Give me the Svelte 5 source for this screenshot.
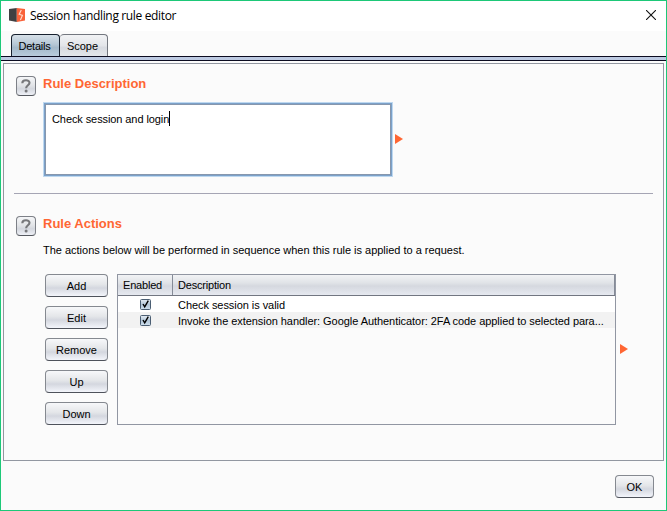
<script>
  const actions = [
    { enabled: true, text: 'Check session is valid' },
    { enabled: true, text: 'Invoke the extension handler: Google Authenticator: 2FA code applied to selected para...' }
  ];
  const buttons = ['Add', 'Edit', 'Remove', 'Up', 'Down'];
</script>

{#snippet help()}
  <span class="help">
    <svg width="10" height="14" viewBox="0 0 10 14">
      <path d="M1.3 4.2C1.3 0.4 8.5 0.2 8.5 3.8C8.5 6.3 5.3 6.2 5.1 9.2" fill="none" stroke="#77787b" stroke-width="2.1" />
      <circle cx="5.1" cy="12.1" r="1.5" fill="#77787b" />
    </svg>
  </span>
{/snippet}

{#snippet arrow()}
  <svg class="arrow" width="8" height="10" viewBox="0 0 8 10"><path d="M0 0L8 5L0 10Z" fill="#ff6633" /></svg>
{/snippet}

<div class="window">
  <header class="titlebar">
    <svg class="logo" width="16" height="14" viewBox="0 0 16 14">
      <path d="M0 1L7.8 0V14L0 12.5Z" fill="#404042" />
      <path d="M7.8 0L16 1V12.5L7.8 14Z" fill="#f9623a" />
      <path d="M12.3 2L10.2 6.2L13.4 7.4L11.4 12" fill="none" stroke="#ffd9ca" stroke-width="1.2" />
    </svg>
    <span class="title">Session handling rule editor</span>
    <svg class="close" width="10" height="10" viewBox="0 0 10 10"><path d="M0 0L10 10M10 0L0 10" stroke="#111" stroke-width="1.1" /></svg>
  </header>

  <nav class="tabs">
    <div class="tab active">Details</div>
    <div class="tab">Scope</div>
  </nav>
  <div class="strip"></div>

  <main class="panel">
    <section class="description">
      {@render help()}
      <div class="body">
        <h2>Rule Description</h2>
        <div class="field-row">
          <div class="field"><span>Check session and login</span><i class="caret"></i></div>
          {@render arrow()}
        </div>
      </div>
    </section>

    <div class="rule"></div>

    <section class="actions">
      {@render help()}
      <div class="body">
        <h2>Rule Actions</h2>
        <p>The actions below will be performed in sequence when this rule is applied to a request.</p>
        <div class="action-row">
          <div class="buttons">
            {#each buttons as label}
              <button>{label}</button>
            {/each}
          </div>
          <div class="table">
            <div class="thead">
              <span class="col-check">Enabled</span>
              <span class="col-text">Description</span>
            </div>
            {#each actions as action}
              <div class="tr">
                <span class="cell-check">
                  {#if action.enabled}
                    <svg width="11" height="11" viewBox="0 0 11 11">
                      <defs><linearGradient id="box" x2="0" y2="1"><stop stop-color="#e6edf4" /><stop offset=".5" stop-color="#b2c5d7" /><stop offset="1" stop-color="#cfe0ee" /></linearGradient></defs>
                      <rect x=".5" y=".5" width="10" height="10" rx="1" fill="url(#box)" stroke="#4b5e73" />
                      <path d="M3 5L4.7 7.9L8.3 1.6" fill="none" stroke="#000" stroke-width="1.4" />
                    </svg>
                  {/if}
                </span>
                <span class="cell-text">{action.text}</span>
              </div>
            {/each}
          </div>
          {@render arrow()}
        </div>
      </div>
    </section>
  </main>

  <footer><button class="ok">OK</button></footer>
</div>

<style>
  :global(body) { margin: 0; }
  .window {
    box-sizing: border-box;
    width: 667px;
    height: 511px;
    border: 1px solid #1dc878;
    background: #fbfbfb;
    color: #000;
    font: 11px/14px "Liberation Sans", Arial, sans-serif;
    display: flex;
    flex-direction: column;
    overflow: hidden;
  }
  .titlebar {
    height: 30px;
    box-sizing: border-box;
    padding: 0 10px 0 8px;
    background: #fff;
    display: flex;
    align-items: center;
    flex: none;
  }
  .logo { margin-right: 5px; margin-top: -2px; }
  .title { font: 12px/16px "Open Sans", "Noto Sans", sans-serif; letter-spacing: -0.35px; flex: 1; white-space: nowrap; }
  .close { margin-top: -2px; }
  .tabs { display: flex; height: 22px; padding: 3px 0 0 10px; flex: none; }
  .tab {
    box-sizing: border-box;
    width: 48px;
    height: 22px;
    padding: 4px 2px 0 0;
    text-align: center;
    border: 1px solid #73777f;
    border-left: 0;
    border-bottom: 0;
    border-radius: 4px 4px 0 0;
    background: linear-gradient(#f2f3f5, #e3e5e9 50%, #d7dae0 60%, #e2e5ea);
  }
  .tab.active {
    width: 49px;
    letter-spacing: -0.25px;
    border: 1px solid #17202e;
    border-bottom: 0;
    background: linear-gradient(#d7e0e8, #b6c7d5 45%, #a4b9ca 60%, #b8cbdc);
  }
  .strip { height: 3px; flex: none; border: solid #0b0b20; border-width: 1px 0; background: #bdcae2; }
  .panel {
    box-sizing: border-box;
    width: 661px;
    height: 398px;
    margin: 2px 0 0 2px;
    border: 1px solid #9297a1;
    flex: none;
  }
  section { display: flex; padding-left: 12px; }
  .description { padding-top: 12px; height: 117px; }
  .help {
    box-sizing: border-box;
    width: 20px;
    height: 20px;
    margin-right: 7px;
    border: 1px solid #7d8087;
    border-bottom-color: #55585f;
    border-radius: 4px;
    background: linear-gradient(#f5f6f8, #e3e5e8 45%, #d4d7de 65%, #eef0f6);
    display: flex;
    align-items: center;
    justify-content: center;
    flex: none;
  }
  h2 { margin: 0; font-size: 13px; line-height: 16px; color: #ff6633; }
  .field-row { display: flex; align-items: center; margin-top: 10px; }
  .field {
    box-sizing: border-box;
    width: 350px;
    height: 75px;
    padding: 9px 8px 8px;
    border: 1px solid #bed8f0;
    box-shadow: inset 0 0 0 1px #7ba1c9, inset 0 0 0 2px #8797ad;
    background: #fff;
    display: flex;
    letter-spacing: -0.09px;
  }
  .caret { width: 1px; height: 15px; background: #000; margin-top: -1px; }
  .arrow { margin-left: 2px; flex: none; margin-bottom: 2px; }
  .action-row .arrow { margin-left: 4px; }
  .rule { height: 1px; width: 639px; margin-left: 10px; background: #a5a5b4; }
  .actions { padding-top: 22px; }
  p { margin: 11px 0 0; white-space: nowrap; letter-spacing: -0.012px; }
  .action-row { display: flex; margin: 17px 0 0 2px; align-items: center; }
  .buttons { display: flex; flex-direction: column; gap: 9px; margin-right: 9px; }
  button {
    box-sizing: border-box;
    width: 63px;
    height: 23px;
    padding: 2px 0 0;
    border: 1px solid #858990;
    border-bottom-color: #4e525b;
    border-radius: 4px;
    background: linear-gradient(#f7f8fa, #e4e6e9 45%, #d4d7df 62%, #f3f5fb);
    color: #000;
    font: 11px/19px "Liberation Sans", Arial, sans-serif;
  }
  .table { box-sizing: border-box; width: 499px; height: 151px; border: 1px solid #9196a2; }
  .thead {
    display: flex;
    height: 20px;
    line-height: 21px;
    letter-spacing: -0.2px;
    border-bottom: 1px solid #727681;
    background: linear-gradient(#f2f3f5, #e0e3e7 40%, #d5d8df 55%, #e6e9f0);
  }
  .col-check { box-sizing: border-box; width: 55px; padding-left: 5px; border-right: 1px solid #858b97; }
  .col-text { padding-left: 5px; flex: 1; border-right: 1px solid #858b97; }
  .tr { display: flex; height: 16px; align-items: center; background: #fff; }
  .tr:nth-child(odd) { background: #f2f2f2; }
  .cell-check { width: 55px; display: flex; justify-content: center; }
  .cell-text { padding-left: 5px; padding-top: 2px; white-space: nowrap; letter-spacing: -0.055px; }
  footer { display: flex; justify-content: flex-end; padding: 14px 12px 0 0; }
  .ok { width: 39px; }
</style>
